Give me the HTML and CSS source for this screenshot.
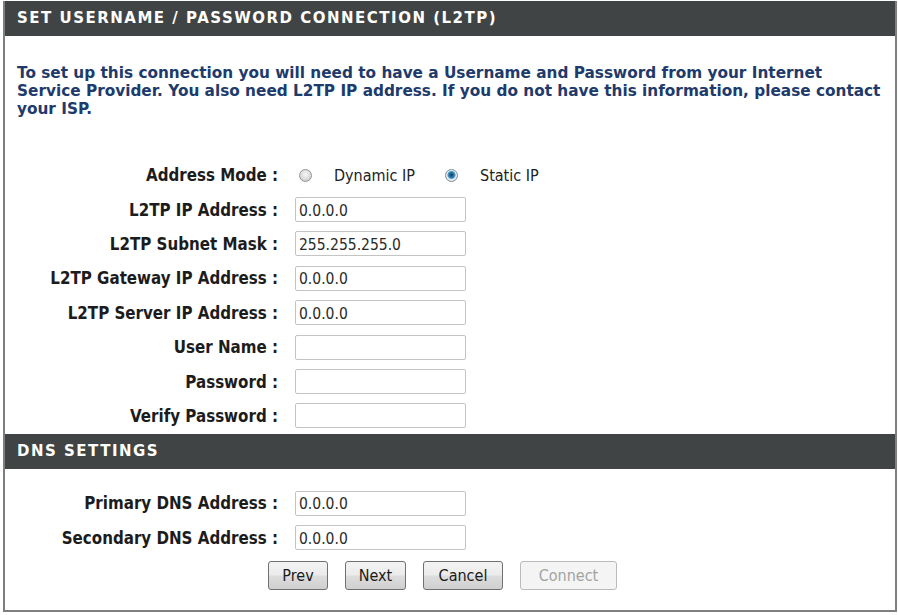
FILE: index.html
```html
<!DOCTYPE html>
<html lang="en">
<head>
    <meta charset="UTF-8">
    <title>L2TP Connection Setup</title>
    <link rel="stylesheet" href="styles.css">
</head>
<body>
    <div class="box">
        <div class="section-title">SET USERNAME / PASSWORD CONNECTION (L2TP)</div>

        <div class="section-body">
            <p class="intro">To set up this connection you will need to have a Username and Password from your Internet Service Provider. You also need L2TP IP address. If you do not have this information, please contact your ISP.</p>

            <div class="form">
                <div class="row">
                    <label class="row-label">Address Mode :</label>
                    <div class="radios">
                        <label class="radio"><input type="radio" name="mode" value="dynamic"><span>Dynamic IP</span></label>
                        <label class="radio"><input type="radio" name="mode" value="static" checked><span>Static IP</span></label>
                    </div>
                </div>
                <div class="row">
                    <label class="row-label" for="l2tp-ip">L2TP IP Address :</label>
                    <input type="text" id="l2tp-ip" value="0.0.0.0">
                </div>
                <div class="row">
                    <label class="row-label" for="l2tp-mask">L2TP Subnet Mask :</label>
                    <input type="text" id="l2tp-mask" value="255.255.255.0">
                </div>
                <div class="row">
                    <label class="row-label" for="l2tp-gw">L2TP Gateway IP Address :</label>
                    <input type="text" id="l2tp-gw" value="0.0.0.0">
                </div>
                <div class="row">
                    <label class="row-label" for="l2tp-server">L2TP Server IP Address :</label>
                    <input type="text" id="l2tp-server" value="0.0.0.0">
                </div>
                <div class="row">
                    <label class="row-label" for="user">User Name :</label>
                    <input type="text" id="user">
                </div>
                <div class="row">
                    <label class="row-label" for="pass">Password :</label>
                    <input type="password" id="pass">
                </div>
                <div class="row">
                    <label class="row-label" for="pass2">Verify Password :</label>
                    <input type="password" id="pass2">
                </div>
            </div>
        </div>

        <div class="section-title">DNS SETTINGS</div>

        <div class="section-body dns">
            <div class="form">
                <div class="row">
                    <label class="row-label" for="dns1">Primary DNS Address :</label>
                    <input type="text" id="dns1" value="0.0.0.0">
                </div>
                <div class="row">
                    <label class="row-label" for="dns2">Secondary DNS Address :</label>
                    <input type="text" id="dns2" value="0.0.0.0">
                </div>
            </div>

            <div class="buttons">
                <button class="btn btn-prev">Prev</button>
                <button class="btn btn-next">Next</button>
                <button class="btn btn-cancel">Cancel</button>
                <button class="btn btn-connect" disabled>Connect</button>
            </div>
        </div>
    </div>
</body>
</html>
```

FILE: styles.css
```css
:root {
    --bar-color: #404444;
    --border-color: #7f7f7f;
    --intro-color: #203a6c;
    --label-color: #1c1c1c;
}

* {
    margin: 0;
    padding: 0;
    box-sizing: border-box;
}

body {
    background-color: white;
    font-family: 'DejaVu Sans Condensed', 'DejaVu Sans', sans-serif;
    color: var(--label-color);
}

.box {
    margin: 1px 1px 0 3px;
    border: 2px solid var(--border-color);
    border-top: 0;
}

.section-title {
    background-color: var(--bar-color);
    color: white;
    font-family: 'DejaVu Sans', sans-serif;
    font-weight: bold;
    font-size: 15px;
    letter-spacing: 1.5px;
    height: 35px;
    line-height: 35px;
    padding-left: 12px;
}

.section-body {
    padding: 0 0 1px 12px;
}

.intro {
    font-family: 'DejaVu Sans', sans-serif;
    font-weight: bold;
    font-size: 15.3px;
    line-height: 18px;
    color: var(--intro-color);
    max-width: 866px;
    margin: 28px 0 40px;
}

.row {
    display: flex;
    align-items: center;
    height: 34.4px;
}

.row-label {
    width: 261px;
    margin-right: 17px;
    text-align: right;
    font-weight: bold;
    font-size: 16.8px;
    color: var(--label-color);
}

.row input[type="text"],
.row input[type="password"] {
    width: 171px;
    height: 25px;
    border: 1px solid #c4c4c4;
    border-radius: 2px;
    padding: 2px 3px 0;
    font-family: 'DejaVu Sans Condensed', sans-serif;
    font-size: 15.5px;
    color: #2a2a2a;
    background: white;
}

/* Radio buttons */
.radios {
    display: flex;
    align-items: center;
    padding-left: 4px;
}

.radio {
    display: flex;
    align-items: center;
    font-size: 16px;
    color: #222;
    margin-right: 30px;
}

.radio span {
    margin-left: 22px;
}

.radio input {
    appearance: none;
    width: 13px;
    height: 13px;
    border-radius: 50%;
    border: 1px solid #959595;
    background: radial-gradient(circle at 50% 40%, #f6f6f6 0%, #dcdcdc 55%, #bdbdbd 100%);
}

.radio input:checked {
    border-color: #7c8f9c;
    background: radial-gradient(circle at 50% 45%, #163f5c 0%, #2a74a4 30%, #5aa6d2 45%, #e8eef2 55%, #cfd4d7 100%);
}

/* DNS section */
.dns {
    padding-top: 17px;
    padding-bottom: 20px;
}

.buttons {
    display: flex;
    justify-content: center;
    gap: 17px;
    margin-top: 6px;
    padding-right: 27px;
}

.btn {
    height: 29px;
    padding: 0 12px;
    font-family: 'DejaVu Sans Condensed', sans-serif;
    font-size: 16px;
    color: #1a1a1a;
    border: 1px solid #707070;
    border-radius: 3px;
    background: linear-gradient(#f3f3f3, #ebebeb 48%, #dddddd 52%, #cfcfcf);
    cursor: pointer;
}

.btn-prev { width: 60px; }
.btn-next { width: 61px; }
.btn-cancel { width: 80px; }
.btn-connect { width: 97px; }

.btn:disabled {
    color: #a3a3a3;
    border-color: #b9bcbe;
    background: #f4f4f4;
    cursor: default;
}
```
